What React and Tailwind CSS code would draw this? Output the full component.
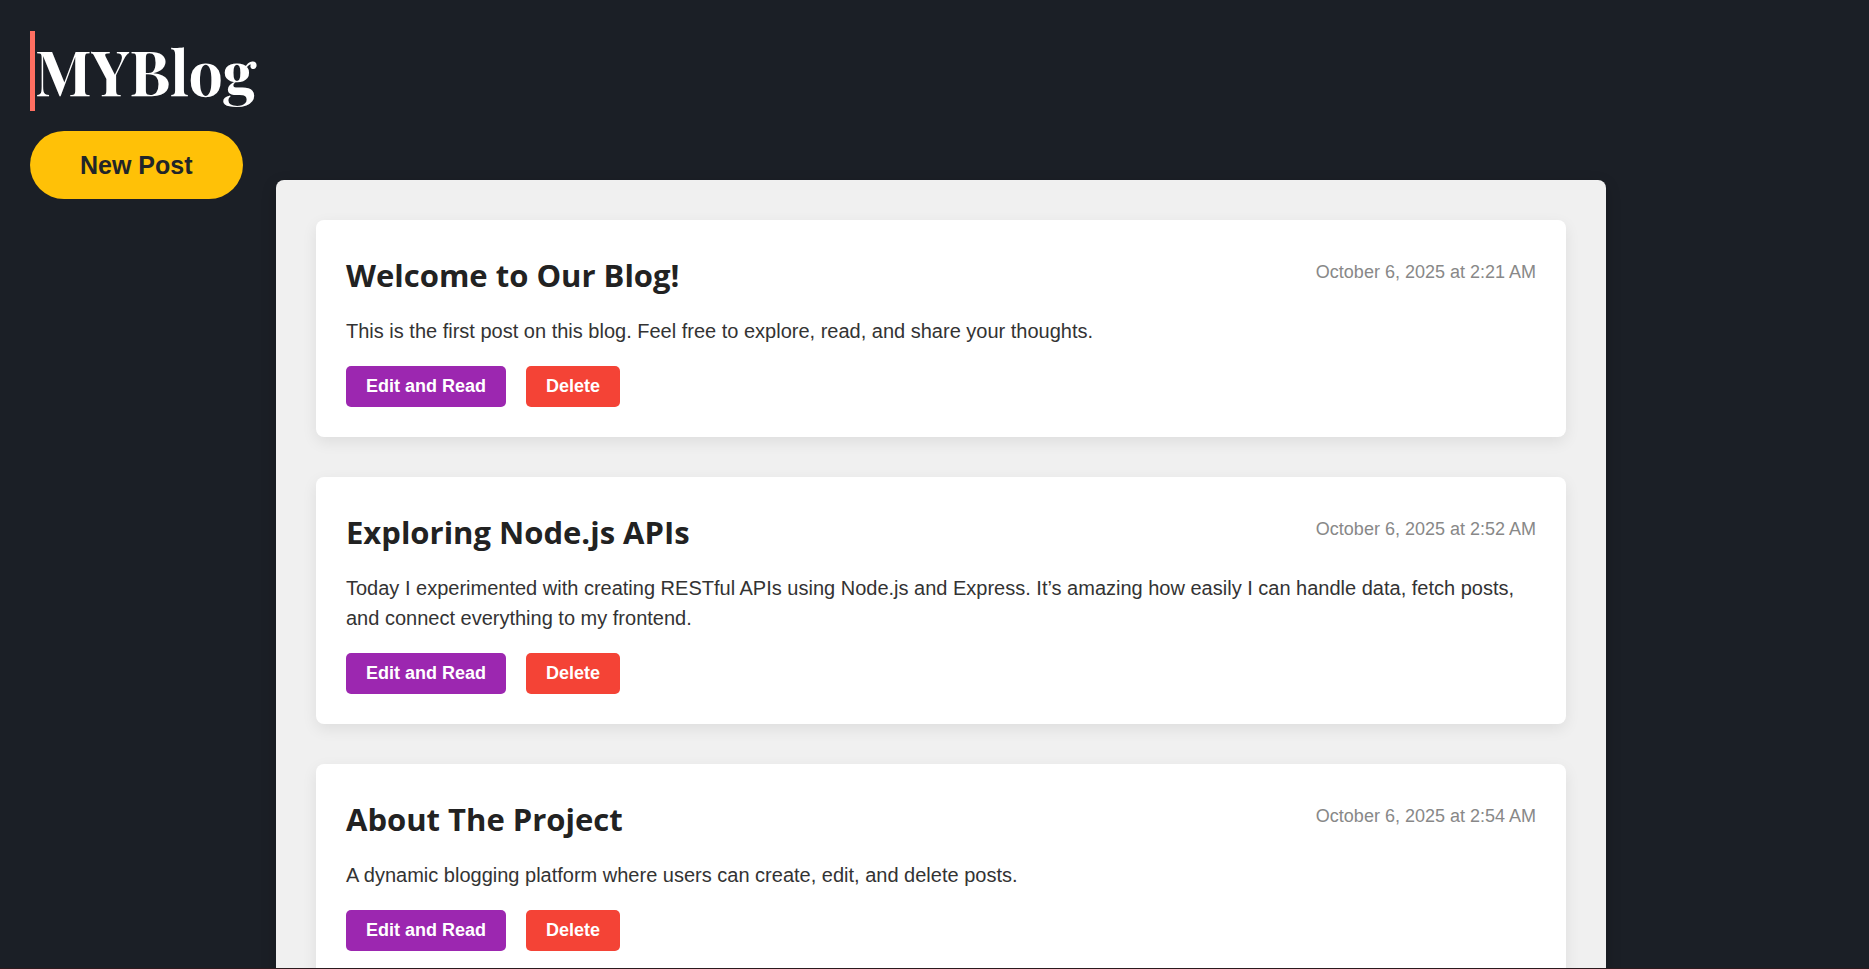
const posts = [
  {
    title: 'Welcome to Our Blog!',
    date: 'October 6, 2025 at 2:21 AM',
    body: 'This is the first post on this blog. Feel free to explore, read, and share your thoughts.',
  },
  {
    title: 'Exploring Node.js APIs',
    date: 'October 6, 2025 at 2:52 AM',
    body: 'Today I experimented with creating RESTful APIs using Node.js and Express. It’s amazing how easily I can handle data, fetch posts, and connect everything to my frontend.',
  },
  {
    title: 'About The Project',
    date: 'October 6, 2025 at 2:54 AM',
    body: 'A dynamic blogging platform where users can create, edit, and delete posts.',
  },
];

function Post({ title, date, body }) {
  return (
    <article className="rounded-lg bg-white p-[30px] shadow-[0_5px_15px_rgba(0,0,0,0.08)]">
      <header className="flex items-start justify-between gap-6">
        <h2 className="font-['Segoe_UI','Open_Sans',sans-serif] text-[31px] leading-[50px] font-bold text-[#222]">{title}</h2>
        <time className="shrink-0 pt-2 text-[18px] leading-[28px] text-[#888]">{date}</time>
      </header>
      <p className="mt-4 text-[20px] leading-[30px] text-[#333]">{body}</p>
      <div className="mt-5 flex gap-5">
        <button type="button" className="rounded-[5px] bg-[#9c27b0] px-5 py-[10px] text-[18px] leading-[21px] font-bold text-white">
          Edit and Read
        </button>
        <button type="button" className="rounded-[5px] bg-[#f44336] px-5 py-[10px] text-[18px] leading-[21px] font-bold text-white">
          Delete
        </button>
      </div>
    </article>
  );
}

export default function App() {
  return (
    <div className="flex h-screen overflow-hidden border-b border-[#2b1a1e] bg-[#1b1f26] font-['Liberation_Sans',Arial,sans-serif]">
      <aside className="flex w-[276px] shrink-0 flex-col items-start pt-[31px] pl-[30px]">
        <h1 className="border-l-[5px] border-[#ff6f61] font-['Playfair_Display','Liberation_Serif',serif] text-[61px] leading-[80px] font-bold text-white">
          MYBlog
        </h1>
        <button
          type="button"
          className="mt-5 rounded-full bg-[#ffc107] px-[50px] py-5 text-[25px] leading-[28px] font-bold text-[#212529]"
        >
          New Post
        </button>
      </aside>
      <main className="mt-[180px] mr-[263px] flex-1">
        <div className="flex flex-col gap-10 rounded-lg bg-[#f0f0f0] p-10 shadow-[0_5px_15px_rgba(0,0,0,0.2)]">
          {posts.map((post) => (
            <Post key={post.title} {...post} />
          ))}
        </div>
      </main>
    </div>
  );
}
